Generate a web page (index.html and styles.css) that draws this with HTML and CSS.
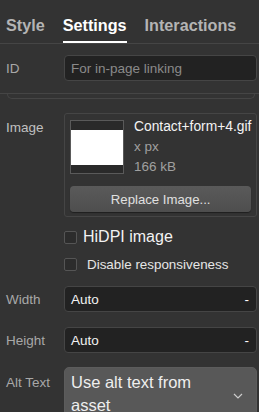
FILE: index.html
```html
<!DOCTYPE html>
<html lang="en">
<head>
    <meta charset="UTF-8">
    <title>Image Settings</title>
    <link rel="stylesheet" href="styles.css">
</head>
<body>
    <div class="panel">
        <nav class="tabs">
            <span class="tab">Style</span>
            <span class="tab active">Settings</span>
            <span class="tab">Interactions</span>
        </nav>

        <div class="row id-row">
            <div class="label">ID</div>
            <div class="input placeholder">For in-page linking</div>
        </div>

        <div class="section-end"></div>

        <div class="row image-row">
            <div class="label">Image</div>
            <div class="image-box">
                <div class="image-info">
                    <div class="thumb"><div class="thumb-inner"></div></div>
                    <div class="meta">
                        <div class="file-name">Contact+form+4.gif</div>
                        <div class="file-detail">x px</div>
                        <div class="file-detail">166 kB</div>
                    </div>
                </div>
                <button class="replace-btn">Replace Image...</button>
            </div>
        </div>

        <label class="check check-hidpi">
            <span class="box"></span>
            <span>HiDPI image</span>
        </label>
        <label class="check check-resp">
            <span class="box"></span>
            <span>Disable responsiveness</span>
        </label>

        <div class="row size-row">
            <div class="label">Width</div>
            <div class="input value">
                <span>Auto</span>
                <span class="unit">-</span>
            </div>
        </div>

        <div class="row size-row">
            <div class="label">Height</div>
            <div class="input value">
                <span>Auto</span>
                <span class="unit">-</span>
            </div>
        </div>

        <div class="row alt-row">
            <div class="label">Alt Text</div>
            <div class="select">
                <span>Use alt text from asset</span>
                <svg class="chevron" width="10" height="6" viewBox="0 0 10 6">
                    <path d="M1 1l4 4 4-4" fill="none" stroke="#ccc" stroke-width="1.2"/>
                </svg>
            </div>
        </div>
    </div>
</body>
</html>
```

FILE: styles.css
```css
:root {
    --panel-bg: #333333;
    --input-bg: #222222;
    --line: #454545;
    --text-primary: #f0f0f0;
    --text-secondary: #a8a8a8;
    --text-muted: #8a8a8a;
}

body {
    margin: 0;
    background-color: var(--panel-bg);
    font-family: 'Liberation Sans', Arial, sans-serif;
    color: var(--text-primary);
    overflow: hidden;
}

.panel {
    height: 412px;
    overflow: hidden;
}

.tabs {
    display: flex;
    gap: 18px;
    padding: 15px 6px 0;
    height: 28px;
    border-bottom: 1px solid var(--line);
}

.tab {
    font-size: 16.2px;
    font-weight: 700;
    color: #b4b4b4;
    line-height: 20px;
    height: 28px;
    box-sizing: border-box;
}

.tab.active {
    color: #ffffff;
    border-bottom: 2px solid #ffffff;
}

.row {
    display: flex;
    align-items: center;
    padding: 0 2px 0 6px;
}

.label {
    width: 58px;
    flex-shrink: 0;
    font-size: 13.5px;
    color: var(--text-secondary);
}

.input {
    flex: 1;
    height: 26px;
    box-sizing: border-box;
    background-color: var(--input-bg);
    border: 1px solid var(--line);
    border-radius: 4px;
    padding: 0 7px 0 6px;
    display: flex;
    align-items: center;
    font-size: 13.5px;
}

.placeholder {
    color: var(--text-muted);
}

.id-row {
    margin-top: 11px;
}

.section-end {
    margin-top: 12px;
    height: 5px;
    border-top: 1px solid var(--line);
}

.section-end::after {
    content: '';
    display: block;
    margin: 0 4px 0 7px;
    height: 4px;
    border: 1px solid var(--line);
    border-top: none;
    border-radius: 0 0 6px 6px;
}

.image-row {
    margin-top: 14px;
    align-items: flex-start;
}

.image-row .label {
    padding-top: 7px;
    color: #c0c0c0;
}

.image-box {
    flex: 1;
    height: 104px;
    box-sizing: border-box;
    border: 1px solid var(--line);
    border-radius: 3px;
    padding: 6px 5px;
}

.image-info {
    display: flex;
    gap: 10px;
}

.thumb {
    width: 54px;
    height: 54px;
    box-sizing: border-box;
    border: 1px solid #5a5a5a;
    background-color: #2a2a2a;
    display: flex;
    align-items: center;
}

.thumb-inner {
    width: 100%;
    height: 35px;
    background-color: #ffffff;
}

.meta {
    font-size: 13.5px;
    line-height: 20px;
    margin-top: -3px;
}

.file-name {
    color: #f4f4f4;
    font-size: 13.8px;
}

.file-detail {
    color: #a0a0a0;
}

.replace-btn {
    display: block;
    width: 100%;
    height: 26px;
    margin-top: 9px;
    border: none;
    border-radius: 4px;
    background: linear-gradient(#5a5a5a, #4e4e4e);
    box-shadow: 0 1px 1px rgba(0, 0, 0, 0.4);
    color: #e0e0e0;
    font-family: inherit;
    font-size: 13.2px;
}

.check {
    display: flex;
    align-items: center;
    gap: 6px;
    padding-left: 64px;
}

.box {
    width: 13px;
    height: 13px;
    box-sizing: border-box;
    border: 1px solid #555555;
    border-radius: 2px;
    background-color: #2c2c2c;
}

.check-hidpi {
    margin-top: 11px;
    font-size: 16px;
    color: #f2f2f2;
}

.check-resp {
    margin-top: 11px;
    font-size: 13.4px;
    color: #e6e6e6;
}

.check-resp .box {
    margin-right: 4px;
}

.size-row {
    margin-top: 14px;
}

.size-row + .size-row {
    margin-top: 15px;
}

.value {
    justify-content: space-between;
    color: #f2f2f2;
}

.unit {
    color: #ffffff;
}

.alt-row {
    margin-top: 14px;
    align-items: flex-start;
}

.alt-row .label {
    padding-top: 8px;
}

.select {
    flex: 1;
    height: 60px;
    box-sizing: border-box;
    background-color: #585858;
    border: 1px solid #5c5c5c;
    border-radius: 5px;
    padding: 3px 28px 0 6px;
    font-size: 16.5px;
    line-height: 23px;
    color: #eeeeee;
    position: relative;
}

.chevron {
    position: absolute;
    right: 13px;
    top: 25px;
}
```
